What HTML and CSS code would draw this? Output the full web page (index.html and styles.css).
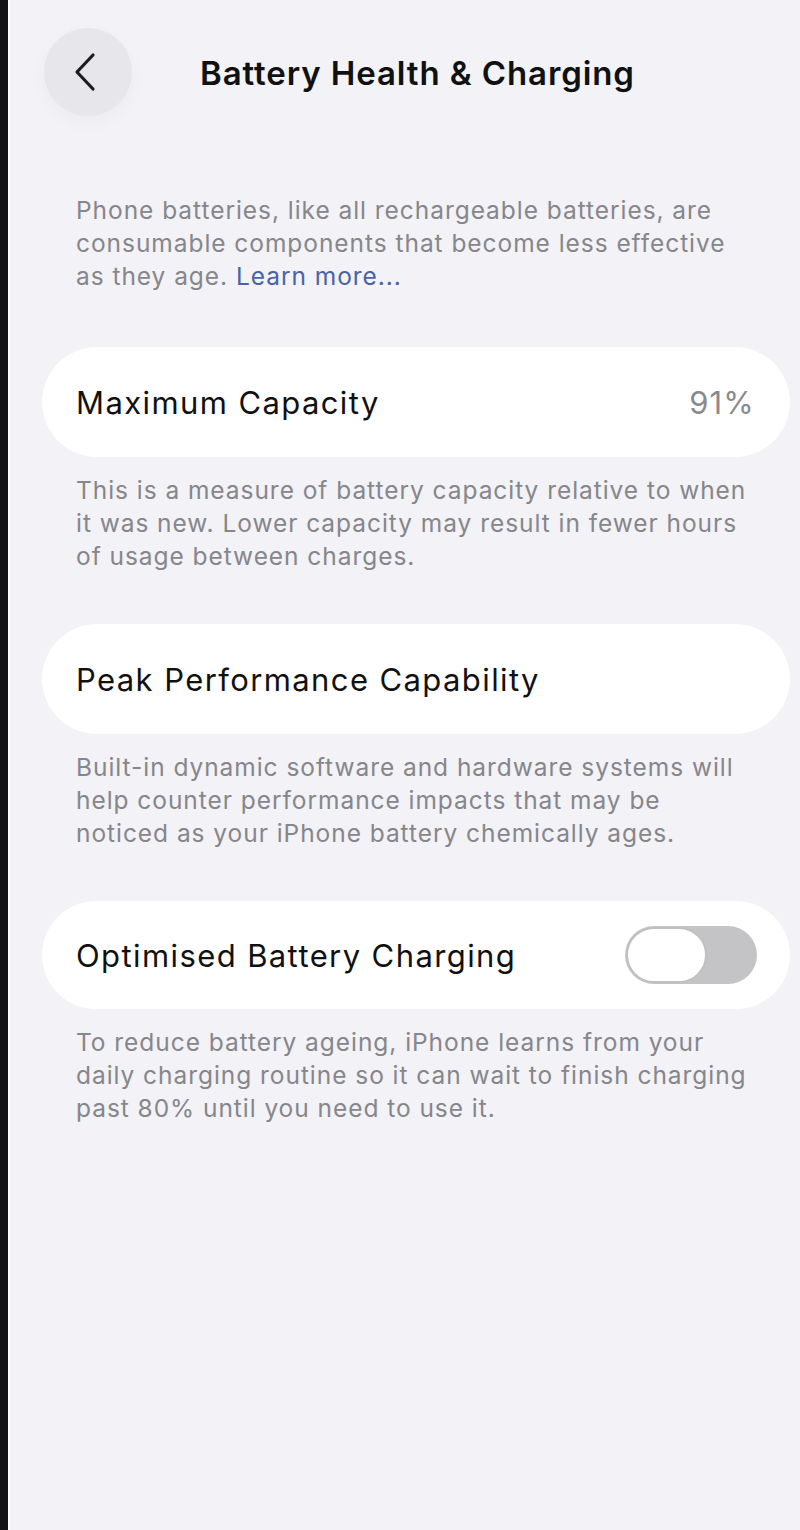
FILE: index.html
```html
<!DOCTYPE html>
<html lang="en">
<head>
<meta charset="utf-8">
<title>Battery Health &amp; Charging</title>
<link rel="stylesheet" href="styles.css">
</head>
<body>
<div class="device">
  <div class="bezel"></div>
  <div class="screen">
    <header class="nav">
      <button class="back" aria-label="Back">
        <svg width="24" height="40" viewBox="0 0 24 40"><path d="M20 3 L4 20 L20 37" fill="none" stroke="#1c1c1e" stroke-width="3.2" stroke-linecap="round" stroke-linejoin="round"/></svg>
      </button>
      <h1 class="title">Battery Health &amp; Charging</h1>
    </header>
    <main class="content">
      <p class="note intro">Phone batteries, like all rechargeable batteries, are consumable components that become less effective as they age. <a class="link" href="#">Learn more...</a></p>

      <div class="card">
        <span class="label">Maximum Capacity</span>
        <span class="value">91%</span>
      </div>
      <p class="note">This is a measure of battery capacity relative to when it was new. Lower capacity may result in fewer hours of usage between charges.</p>

      <div class="card">
        <span class="label">Peak Performance Capability</span>
      </div>
      <p class="note">Built-in dynamic software and hardware systems will help counter performance impacts that may be noticed as your iPhone battery chemically ages.</p>

      <div class="card card-toggle">
        <span class="label">Optimised Battery Charging</span>
        <span class="toggle"><span class="thumb"></span></span>
      </div>
      <p class="note">To reduce battery ageing, iPhone learns from your daily charging routine so it can wait to finish charging past 80% until you need to use it.</p>
    </main>
  </div>
</div>
</body>
</html>
```

FILE: styles.css
```css
* { box-sizing: border-box; }
html, body { margin: 0; padding: 0; }
body {
  background: #f2f2f7;
  font-family: Inter, "Noto Sans", "Liberation Sans", sans-serif;
  color: #111;
}
.device {
  display: flex;
  min-height: 1530px;
}
.bezel {
  flex: none;
  width: 10px;
  background: #121214;
  border-right: 2px solid #fbfbfd;
}
.screen {
  flex: 1;
  background: #f2f2f7;
}
.nav {
  display: flex;
  align-items: center;
  padding: 28px 0 0 34px;
  height: 116px;
}
.back {
  width: 88px;
  height: 88px;
  border-radius: 50%;
  border: none;
  background: #e6e6eb;
  box-shadow: 0 6px 18px rgba(0,0,0,0.03);
  display: flex;
  align-items: center;
  justify-content: center;
  padding: 0 6px 0 0;
  flex: none;
}
.title {
  margin: 2px 0 0 68px;
  font-size: 33px;
  font-weight: 600;
  letter-spacing: 0.9px;
  color: #111;
}
.content {
  padding: 78px 10px 0 32px;
}
.note {
  margin: 0;
  padding: 0 30px 0 34px;
  font-size: 24.5px;
  line-height: 33px;
  color: #86868b;
  letter-spacing: 0.95px;
}
.intro { margin-bottom: 54px; }
.link { color: #4a62a6; text-decoration: none; }
.card {
  background: #fff;
  border-radius: 55px;
  height: 110px;
  display: flex;
  align-items: center;
  justify-content: space-between;
  padding: 0 35px 0 34px;
  margin-bottom: 17px;
}
.card + .note { margin-bottom: 51px; }
.card-toggle { height: 108px; margin-top: 2px; padding-right: 33px; }
.label {
  font-size: 31px;
  color: #111;
  letter-spacing: 1.4px;
}
.value {
  font-size: 31px;
  color: #8a8a8e;
  letter-spacing: 1.2px;
}
.toggle {
  width: 132px;
  height: 58px;
  border-radius: 29px;
  background: #c4c4c7;
  display: flex;
  align-items: center;
  padding-left: 1px;
}
.thumb {
  width: 81px;
  height: 56px;
  border-radius: 28px;
  background: #fff;
  border: 2.5px solid #c0c0c3;
}
```
